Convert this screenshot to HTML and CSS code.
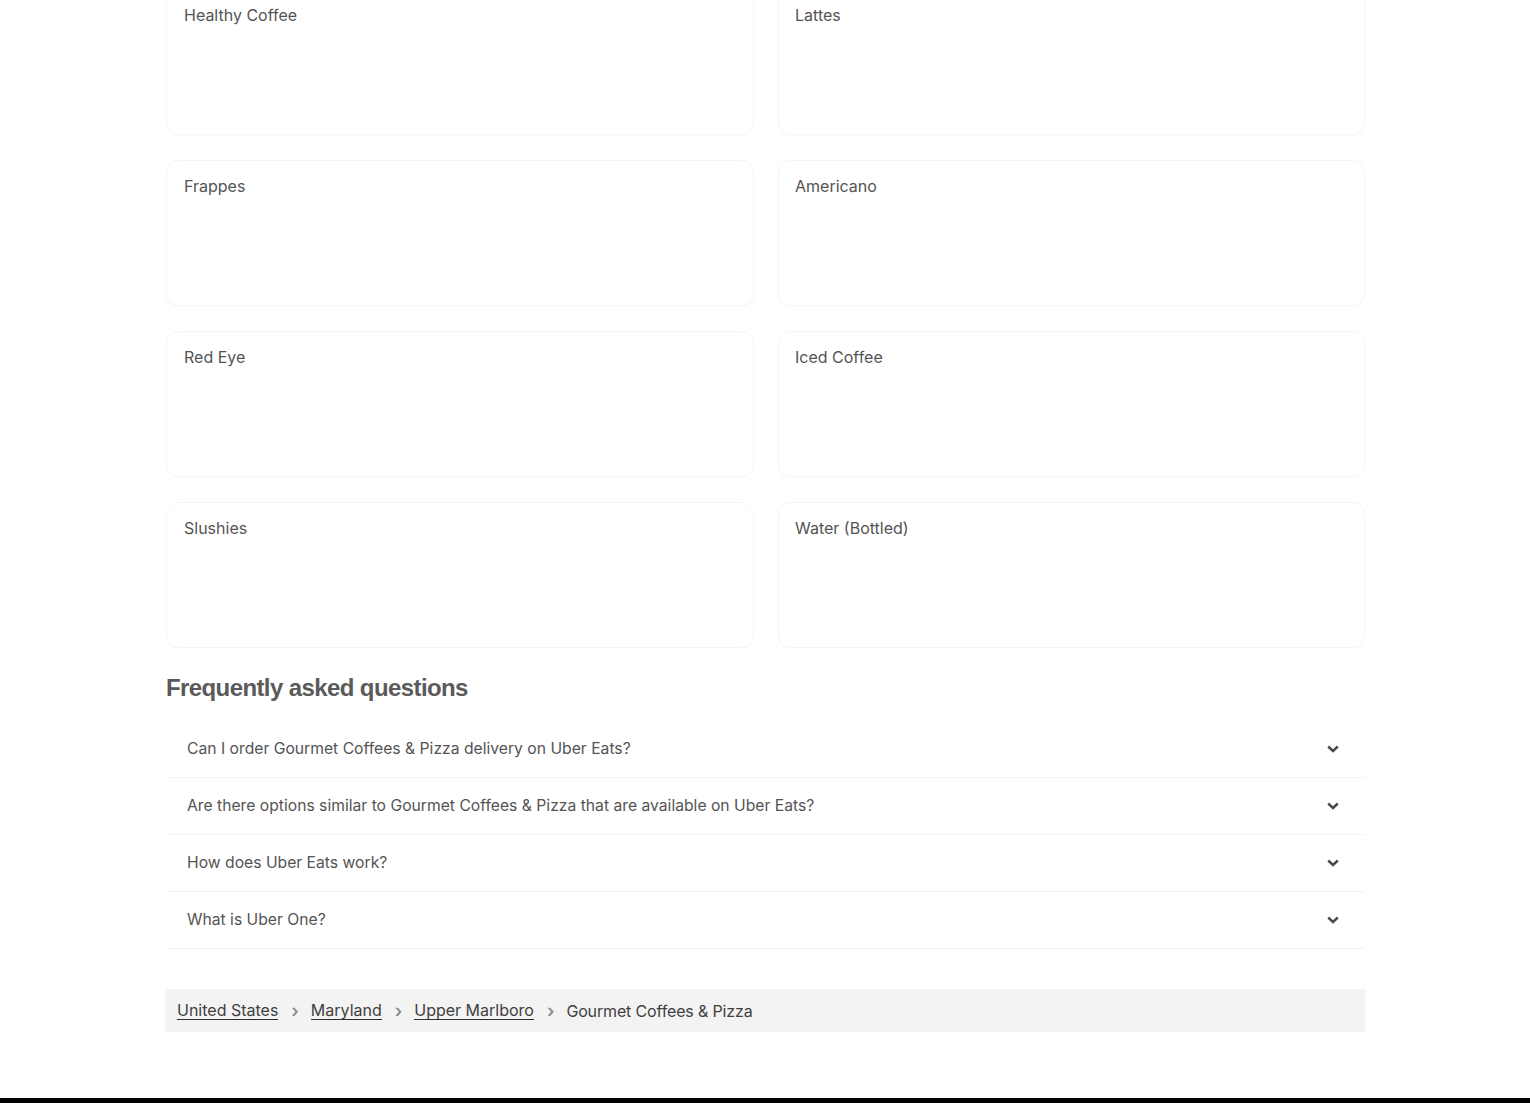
FILE: index.html
```html
<!DOCTYPE html>
<html lang="en">
<head>
<meta charset="utf-8">
<title>Gourmet Coffees &amp; Pizza</title>
<link rel="stylesheet" href="styles.css">
</head>
<body>
<main class="page">
  <section class="cards">
    <div class="card"><span class="card-title">Healthy Coffee</span></div>
    <div class="card"><span class="card-title">Lattes</span></div>
    <div class="card"><span class="card-title">Frappes</span></div>
    <div class="card"><span class="card-title">Americano</span></div>
    <div class="card"><span class="card-title">Red Eye</span></div>
    <div class="card"><span class="card-title">Iced Coffee</span></div>
    <div class="card"><span class="card-title">Slushies</span></div>
    <div class="card"><span class="card-title">Water (Bottled)</span></div>
  </section>

  <section class="faq">
    <h2 class="faq-title">Frequently asked questions</h2>
    <ul class="faq-list">
      <li class="faq-item"><span>Can I order Gourmet Coffees &amp; Pizza delivery on Uber Eats?</span><svg class="chev" width="12" height="8" viewBox="0 0 12 8"><path d="M1.2 1.5 L6 6 L10.8 1.5" fill="none" stroke="#4a4a4a" stroke-width="2.4"/></svg></li>
      <li class="faq-item"><span>Are there options similar to Gourmet Coffees &amp; Pizza that are available on Uber Eats?</span><svg class="chev" width="12" height="8" viewBox="0 0 12 8"><path d="M1.2 1.5 L6 6 L10.8 1.5" fill="none" stroke="#4a4a4a" stroke-width="2.4"/></svg></li>
      <li class="faq-item"><span>How does Uber Eats work?</span><svg class="chev" width="12" height="8" viewBox="0 0 12 8"><path d="M1.2 1.5 L6 6 L10.8 1.5" fill="none" stroke="#4a4a4a" stroke-width="2.4"/></svg></li>
      <li class="faq-item"><span>What is Uber One?</span><svg class="chev" width="12" height="8" viewBox="0 0 12 8"><path d="M1.2 1.5 L6 6 L10.8 1.5" fill="none" stroke="#4a4a4a" stroke-width="2.4"/></svg></li>
    </ul>
  </section>

  <nav class="crumbs">
    <a href="#" class="crumb-link">United States</a>
    <span class="crumb-sep">›</span>
    <a href="#" class="crumb-link">Maryland</a>
    <span class="crumb-sep">›</span>
    <a href="#" class="crumb-link">Upper Marlboro</a>
    <span class="crumb-sep">›</span>
    <span class="crumb-current">Gourmet Coffees &amp; Pizza</span>
  </nav>
</main>
<footer class="footer"></footer>
</body>
</html>
```

FILE: styles.css
```css
html, body {
  margin: 0;
  padding: 0;
  background: #ffffff;
}

body {
  font-family: Inter, "Liberation Sans", Arial, sans-serif;
  color: #545454;
  overflow: hidden;
  height: 1103px;
  display: flex;
  flex-direction: column;
}

.page {
  width: 1200px;
  margin: -11px auto 0;
  flex: 1;
}

.cards {
  display: grid;
  grid-template-columns: 588px 587px;
  column-gap: 24px;
  row-gap: 25px;
  padding-left: 1px;
}

.card {
  height: 146px;
  box-sizing: border-box;
  border: 1px solid #f5f5f5;
  border-radius: 12px;
  padding: 15px 16px 16px 17px;
  box-shadow: 0 1px 2px rgba(0, 0, 0, 0.015);
}

.card:nth-child(even) {
  padding-left: 16px;
}

.card-title {
  display: block;
  font-size: 16px;
  line-height: 20px;
  color: #545454;
}

.faq {
  padding-left: 1px;
}

.faq-title {
  margin: 26px 0 19px;
  font-family: "Liberation Sans", Arial, sans-serif;
  font-size: 24px;
  line-height: 28px;
  font-weight: 700;
  letter-spacing: -0.6px;
  color: #5a5a5a;
}

.faq-list {
  list-style: none;
  margin: 0;
  padding: 0;
}

.faq-item {
  box-sizing: border-box;
  height: 57px;
  border-bottom: 1px solid #f2f2f2;
  display: flex;
  align-items: center;
  justify-content: space-between;
  padding: 0 26px 1px 21px;
  font-size: 15.7px;
  color: #545454;
}

.chev {
  display: block;
}

.crumbs {
  margin-top: 40px;
  height: 43px;
  background: #f3f3f3;
  display: flex;
  align-items: center;
  padding: 0 12px;
  font-size: 16px;
}

.crumb-link {
  color: #3f3f3f;
  text-decoration: none;
  border-bottom: 1px solid #2e2e2e;
  line-height: 18px;
}

.crumb-sep {
  color: #8a8a8a;
  margin: 0 12px 0 13px;
  font-size: 18px;
  line-height: 18px;
  font-weight: 600;
}

.crumb-current {
  color: #3f3f3f;
  letter-spacing: -0.15px;
}

.footer {
  height: 5px;
  background: #000000;
  flex: none;
}
```
